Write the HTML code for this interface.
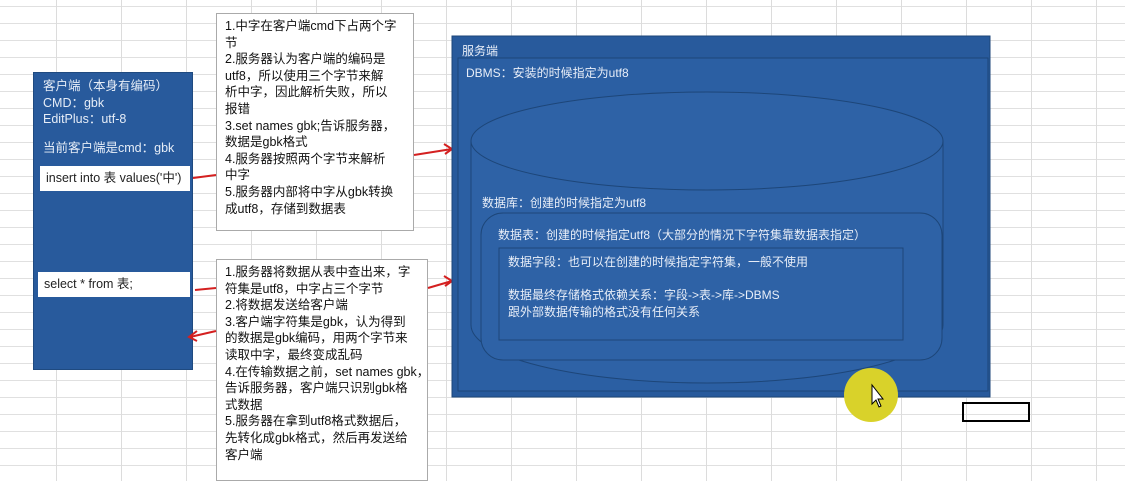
<!DOCTYPE html>
<html><head><meta charset="utf-8"><style>
body{margin:0;width:1125px;height:478px;overflow:hidden;position:relative;font-family:"Liberation Sans","Noto Sans CJK SC",sans-serif;
background-color:#fff;
background-image:linear-gradient(to right,#dcdcdc 1px,transparent 1px),linear-gradient(to bottom,#e0e0e0 1px,transparent 1px);
background-size:65px 17px;background-position:56px 6px;}
.a{position:absolute;box-sizing:border-box}
.note{background:#fff;border:1px solid #aaa;font-size:12.5px;line-height:16.6px;color:#111;padding:4px 8px;white-space:nowrap}
.blue{background:#285a9c;color:#fff}
.inp{background:#fff;color:#222;font-size:12.5px;padding:0 6px;line-height:24px;white-space:nowrap}
.w{color:#e8eef8;font-size:12px;white-space:nowrap}
</style></head><body>
<div class="a blue" style="left:33px;top:72px;width:160px;height:298px;border:1px solid #1f4a80;padding:5px 9px;font-size:12.5px;line-height:16.5px;color:#e6edf7;white-space:nowrap">
客户端（本身有编码）<br>CMD：gbk<br>EditPlus：utf-8<br><div style="height:12px"></div>当前客户端是cmd：gbk</div>
<div class="a inp" style="left:40px;top:166px;width:150px;height:25px">insert into 表 values('中')</div>
<div class="a inp" style="left:38px;top:272px;width:152px;height:25px">select * from 表;</div>
<div class="a note" style="left:216px;top:13px;width:198px;height:218px">1.中字在客户端cmd下占两个字<br>节<br>2.服务器认为客户端的编码是<br>utf8，所以使用三个字节来解<br>析中字，因此解析失败，所以<br>报错<br>3.set names gbk;告诉服务器，<br>数据是gbk格式<br>4.服务器按照两个字节来解析<br>中字<br>5.服务器内部将中字从gbk转换<br>成utf8，存储到数据表</div>
<div class="a note" style="left:216px;top:259px;width:212px;height:222px">1.服务器将数据从表中查出来，字<br>符集是utf8，中字占三个字节<br>2.将数据发送给客户端<br>3.客户端字符集是gbk，认为得到<br>的数据是gbk编码，用两个字节来<br>读取中字，最终变成乱码<br>4.在传输数据之前，set names gbk，<br>告诉服务器，客户端只识别gbk格<br>式数据<br>5.服务器在拿到utf8格式数据后，<br>先转化成gbk格式，然后再发送给<br>客户端</div>
<svg class="a" style="left:0;top:0" width="1125" height="478">
<g stroke="#d42020" stroke-width="2" fill="none">
<line x1="193" y1="178" x2="216" y2="175"/>
<line x1="414" y1="155" x2="452" y2="149"/><polyline points="444,144 452,149 445,154"/>
<line x1="195" y1="290" x2="216" y2="288"/>
<line x1="216" y1="331" x2="190" y2="337"/><polyline points="197,331 189,337 197,341"/>
<line x1="428" y1="288" x2="452" y2="281"/><polyline points="444,276 452,281 445,286"/>
</g>
<rect x="452" y="36" width="538" height="361" fill="#285a9c" stroke="#1d4679"/>
<rect x="458" y="58" width="530" height="333" fill="#2b5fa3" stroke="#1d4679"/>
<path d="M471,141 L471,325 A236,58 0 0 0 943,325 L943,141" fill="#2e62a6" stroke="#1d4679"/>
<ellipse cx="707" cy="141" rx="236" ry="49" fill="#2e62a6" stroke="#1d4679"/>
<rect x="481" y="213" width="461" height="147" rx="22" fill="#2e62a6" stroke="#1d4679"/>
<rect x="499" y="248" width="404" height="92" fill="#2e62a6" stroke="#1d4679"/>
<circle cx="871" cy="395" r="27" fill="#d9d22a"/>
<path d="M872,385 l0,19 l4,-4 l3,7 l2,-1 l-3,-7 l5,0 z" fill="#fff" stroke="#000"/>
<rect x="963" y="403" width="66" height="18" fill="none" stroke="#000" stroke-width="2"/>
</svg>
<div class="a w" style="left:462px;top:42px">服务端</div>
<div class="a w" style="left:466px;top:64px">DBMS：安装的时候指定为utf8</div>
<div class="a w" style="left:482px;top:194px">数据库：创建的时候指定为utf8</div>
<div class="a w" style="left:498px;top:226px">数据表：创建的时候指定utf8（大部分的情况下字符集靠数据表指定）</div>
<div class="a w" style="left:508px;top:254px;line-height:16.5px">数据字段：也可以在创建的时候指定字符集，一般不使用<br><br>数据最终存储格式依赖关系：字段-&gt;表-&gt;库-&gt;DBMS<br>跟外部数据传输的格式没有任何关系</div>
</body></html>
